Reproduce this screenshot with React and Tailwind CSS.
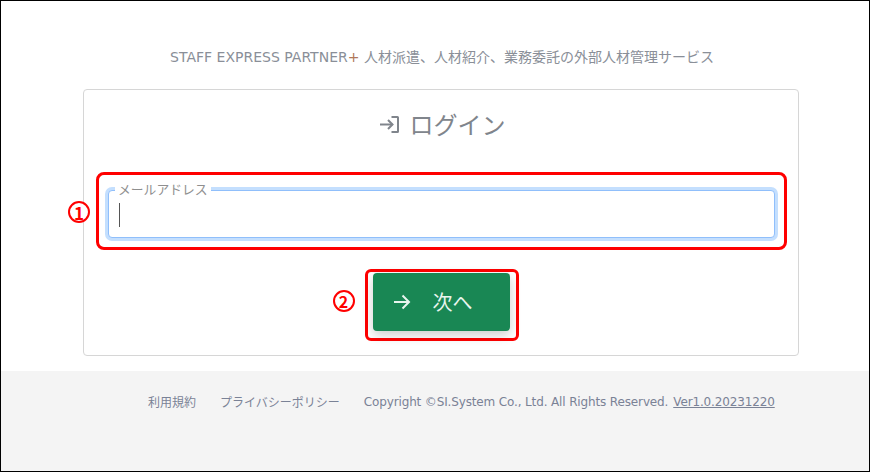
import React from "react";

function LoginIcon() {
  return (
    <svg width="19" height="17" viewBox="0 0 19 17" fill="none" stroke="#80858c" strokeWidth="2" className="shrink-0">
      <path d="M11.5 1h6a.5.5 0 0 1 .5.5v14a.5.5 0 0 1-.5.5h-6" />
      <path d="M0 8.5h12.5" />
      <path d="M8 4l4.5 4.5L8 13" />
    </svg>
  );
}

function ArrowIcon() {
  return (
    <svg width="18" height="16" viewBox="0 0 18 16" fill="none" stroke="#e8f5ee" strokeWidth="2" className="shrink-0">
      <path d="M1 8h15" />
      <path d="M9.5 1.5L16 8l-6.5 6.5" />
    </svg>
  );
}

export default function App() {
  return (
    <div className="w-[870px] h-[472px] border border-black bg-white flex flex-col font-['DejaVu_Sans','Noto_Sans_CJK_JP',sans-serif] overflow-hidden">
      <p className="mt-[46px] h-[18px] pl-[14px] leading-[18px] text-center text-[14px] text-[#8a8f98] whitespace-nowrap">
        STAFF EXPRESS PARTNER<span className="text-[#b0785a]">+</span> <span className="font-['Noto_Sans_CJK_JP',sans-serif]">人材派遣、人材紹介、業務委託の外部人材管理サービス</span>
      </p>
      <div className="mt-[24px] ml-[82px] w-[716px] h-[267px] border border-[#d6d6d6] rounded-[4px] pl-[12px] pr-[11px] flex flex-col font-['Noto_Sans_CJK_JP',sans-serif]">
        <div className="mt-[16px] h-[36px] pl-[2px] flex items-center justify-center gap-[11px] text-[24px] text-[#80858c]">
          <LoginIcon />
          <span className="leading-[36px]">ログイン</span>
        </div>
        <div className="relative mt-[30px] h-[78px] border-[3px] border-[#ff0000] rounded-[8px] px-[9px] pt-[15px]">
          <span className="absolute -left-[31px] top-[26px] w-[22px] h-[22px] rounded-full border-2 border-[#ff0000] flex items-center justify-center text-[17px] font-bold text-[#ff0000] leading-none bg-white">1</span>
          <div className="relative h-[48px] rounded-[4px] border border-[#90bffb] shadow-[0_0_0_3px_#c4dffe] bg-white">
            <span className="absolute left-[6px] -top-[9px] px-[3px] bg-white text-[12.8px] leading-[14px] text-[#8f8f8f]">メールアドレス</span>
            <span className="absolute left-[10px] top-[12px] w-px h-[24px] bg-[#555]" />
          </div>
        </div>
        <div className="relative mt-[19px] self-center w-[154px] h-[72px] border-[3px] border-[#ff0000] rounded-[6px] pl-[5px] pt-[1px]">
          <span className="absolute -left-[35px] top-[18px] w-[22px] h-[22px] rounded-full border-2 border-[#ff0000] flex items-center justify-center text-[16px] font-bold text-[#ff0000] leading-none bg-white">2</span>
          <button className="w-[137px] h-[58px] bg-[#198754] rounded-[4px] shadow-[0_4px_12px_rgba(0,0,0,0.2)] flex items-center pl-[20px] gap-[22px] text-[20px] text-[#e8f5ee]">
            <ArrowIcon />
            <span>次へ</span>
          </button>
        </div>
      </div>
      <footer className="mt-[15px] flex-1 bg-[#f4f4f4] flex items-start pt-[22px] pl-[147px] text-[12px] leading-[18px] text-[#7a8296] whitespace-nowrap">
        <a className="mr-[24px] font-['Noto_Sans_CJK_JP',sans-serif]">利用規約</a>
        <a className="mr-[24px] font-['Noto_Sans_CJK_JP',sans-serif]">プライバシーポリシー</a>
        <span className="mr-[5px] tracking-[-0.14px]">Copyright ©SI.System Co., Ltd. All Rights Reserved.</span>
        <a className="underline tracking-[-0.14px]">Ver1.0.20231220</a>
      </footer>
    </div>
  );
}
